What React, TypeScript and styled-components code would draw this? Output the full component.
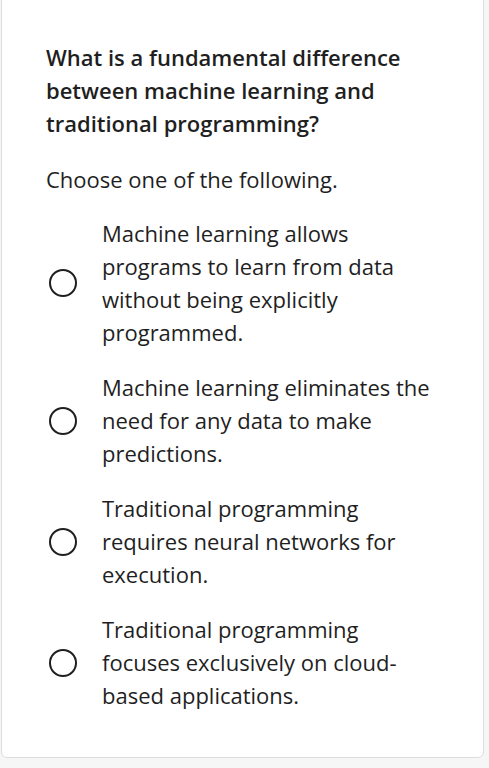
import React from "react";
import styled, { createGlobalStyle } from "styled-components";

const Global = createGlobalStyle`
  html, body { margin: 0; padding: 0; background: #f6f6f6; }
  body { font-family: "Open Sans", "Noto Sans", sans-serif; color: #1f1f1f; }
`;

const Card = styled.div`
  box-sizing: border-box;
  width: 483px;
  margin: -10px 0 0 1px;
  background: #ffffff;
  border: 1px solid #dcdcdc;
  border-radius: 6px;
  padding: 50px 44px 45px 44px;
`;

const Question = styled.h2`
  margin: 0;
  font-size: 22px;
  font-weight: 600;
  line-height: 33px;
  color: #1f1f1f;
`;

const Prompt = styled.p`
  margin: 23px 0 21px;
  font-size: 22px;
  font-weight: 400;
  line-height: 33px;
`;

const Options = styled.div`
  display: flex;
  flex-direction: column;
  gap: 21.7px;
`;

const Option = styled.label`
  display: flex;
  align-items: center;
  gap: 25px;
  cursor: pointer;
`;

const Radio = styled.span`
  flex: none;
  box-sizing: border-box;
  width: 28px;
  height: 28px;
  margin-left: 3px;
  border: 2.5px solid #1f1f1f;
  border-radius: 50%;
`;

const OptionText = styled.span`
  width: 334px;
  font-size: 22px;
  line-height: 33.1px;
`;

const options = [
  "Machine learning allows programs to learn from data without being explicitly programmed.",
  "Machine learning eliminates the need for any data to make predictions.",
  "Traditional programming requires neural networks for execution.",
  "Traditional programming focuses exclusively on cloud-based applications.",
];

export default function App() {
  return (
    <>
      <Global />
      <Card>
        <Question>
          What is a fundamental difference between machine learning and traditional programming?
        </Question>
        <Prompt>Choose one of the following.</Prompt>
        <Options>
          {options.map((o) => (
            <Option key={o}>
              <Radio />
              <OptionText>{o}</OptionText>
            </Option>
          ))}
        </Options>
      </Card>
    </>
  );
}
